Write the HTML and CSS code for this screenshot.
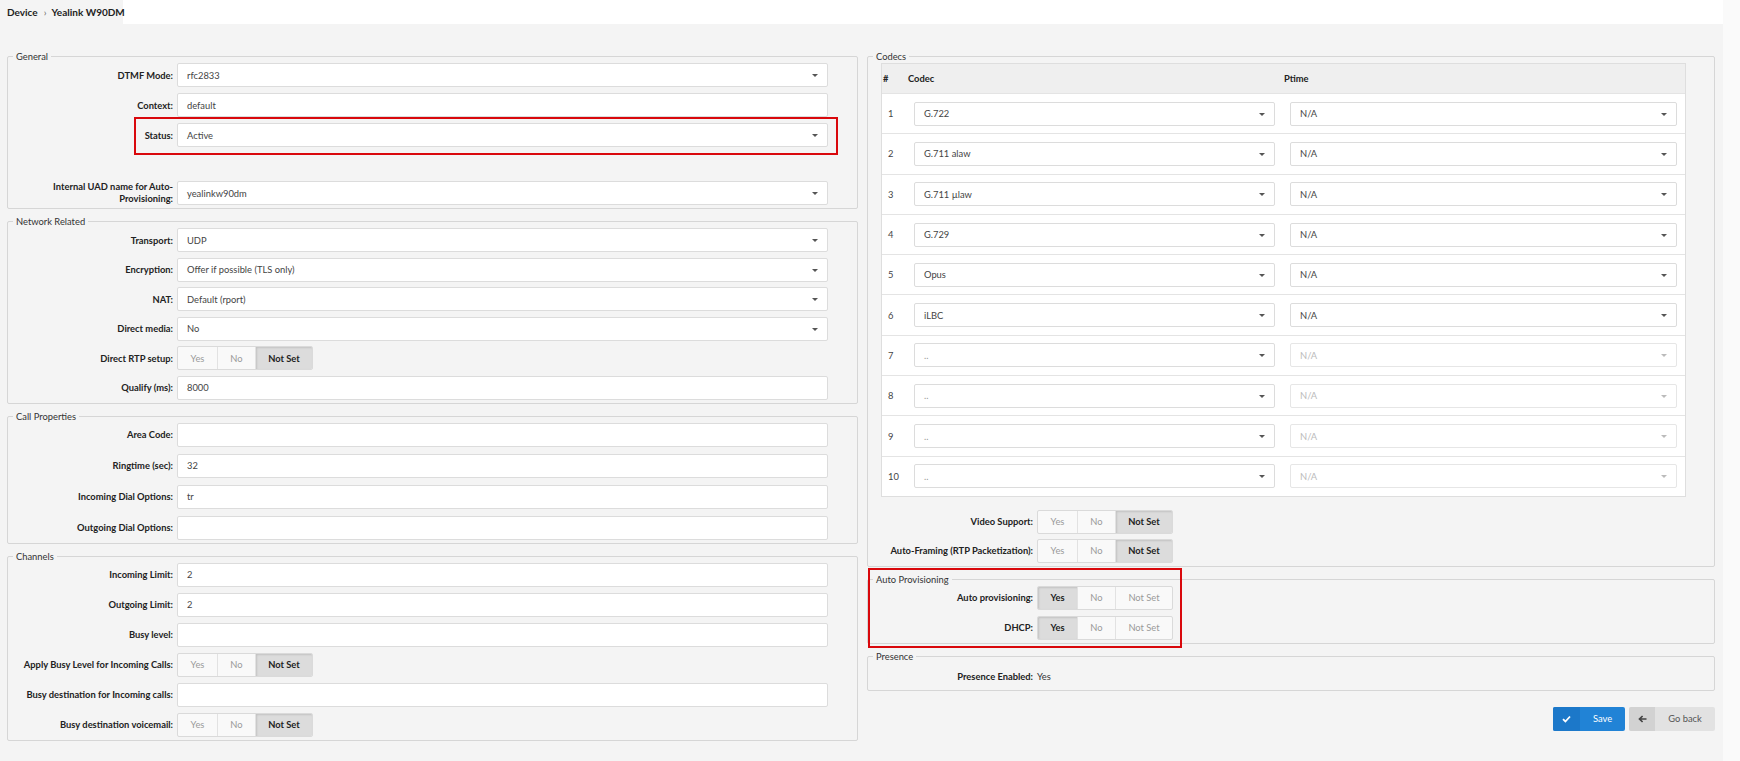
FILE: index.html
```html
<!DOCTYPE html>
<html>
<head>
<meta charset="utf-8">
<title>Device - Yealink W90DM</title>
<link rel="stylesheet" href="styles.css">
</head>
<body>
<div class="app">
  <div class="main">
    <header class="topbar">
      <div class="crumb"><span>Device</span><span class="sep">›</span><span>Yealink W90DM</span></div>
    </header>
    <div class="content">
      <div class="col">
        <fieldset class="fs">
          <legend>General</legend>
          <div class="rows">
            <div class="row"><label>DTMF Mode:</label><div class="ctl sel">rfc2833</div></div>
            <div class="row"><label>Context:</label><div class="ctl">default</div></div>
            <div class="row hl-wrap"><label>Status:</label><div class="ctl sel">Active</div><div class="hl hl-status"></div></div>
            <div class="spacer"></div>
            <div class="row"><label class="two">Internal UAD name for Auto-<br>Provisioning:</label><div class="ctl sel">yealinkw90dm</div></div>
          </div>
        </fieldset>
        <fieldset class="fs">
          <legend>Network Related</legend>
          <div class="rows net">
            <div class="row"><label>Transport:</label><div class="ctl sel">UDP</div></div>
            <div class="row"><label>Encryption:</label><div class="ctl sel">Offer if possible (TLS only)</div></div>
            <div class="row"><label>NAT:</label><div class="ctl sel">Default (rport)</div></div>
            <div class="row"><label>Direct media:</label><div class="ctl sel">No</div></div>
            <div class="row"><label>Direct RTP setup:</label><div class="tog"><span class="y">Yes</span><span class="n">No</span><span class="ns on">Not Set</span></div></div>
            <div class="row"><label>Qualify (ms):</label><div class="ctl">8000</div></div>
          </div>
        </fieldset>
        <fieldset class="fs">
          <legend>Call Properties</legend>
          <div class="rows call">
            <div class="row"><label>Area Code:</label><div class="ctl"></div></div>
            <div class="row"><label>Ringtime (sec):</label><div class="ctl">32</div></div>
            <div class="row"><label>Incoming Dial Options:</label><div class="ctl">tr</div></div>
            <div class="row"><label>Outgoing Dial Options:</label><div class="ctl"></div></div>
          </div>
        </fieldset>
        <fieldset class="fs">
          <legend>Channels</legend>
          <div class="rows">
            <div class="row"><label>Incoming Limit:</label><div class="ctl">2</div></div>
            <div class="row"><label>Outgoing Limit:</label><div class="ctl">2</div></div>
            <div class="row"><label>Busy level:</label><div class="ctl"></div></div>
            <div class="row"><label>Apply Busy Level for Incoming Calls:</label><div class="tog"><span class="y">Yes</span><span class="n">No</span><span class="ns on">Not Set</span></div></div>
            <div class="row"><label>Busy destination for Incoming calls:</label><div class="ctl"></div></div>
            <div class="row"><label>Busy destination voicemail:</label><div class="tog"><span class="y">Yes</span><span class="n">No</span><span class="ns on">Not Set</span></div></div>
          </div>
        </fieldset>
      </div>

      <div class="col">
        <fieldset class="fs codecs">
          <legend>Codecs</legend>
          <div class="ctable">
            <div class="tr thead"><div class="c0">#</div><div class="c1">Codec</div><div class="c2">Ptime</div></div>
            <div class="tr"><div class="c0">1</div><div class="c1"><div class="ctl sel">G.722</div></div><div class="c2"><div class="ctl sel">N/A</div></div></div>
            <div class="tr"><div class="c0">2</div><div class="c1"><div class="ctl sel">G.711 alaw</div></div><div class="c2"><div class="ctl sel">N/A</div></div></div>
            <div class="tr"><div class="c0">3</div><div class="c1"><div class="ctl sel">G.711 µlaw</div></div><div class="c2"><div class="ctl sel">N/A</div></div></div>
            <div class="tr"><div class="c0">4</div><div class="c1"><div class="ctl sel">G.729</div></div><div class="c2"><div class="ctl sel">N/A</div></div></div>
            <div class="tr"><div class="c0">5</div><div class="c1"><div class="ctl sel">Opus</div></div><div class="c2"><div class="ctl sel">N/A</div></div></div>
            <div class="tr"><div class="c0">6</div><div class="c1"><div class="ctl sel">iLBC</div></div><div class="c2"><div class="ctl sel">N/A</div></div></div>
            <div class="tr"><div class="c0">7</div><div class="c1"><div class="ctl sel ph">..</div></div><div class="c2"><div class="ctl sel dis">N/A</div></div></div>
            <div class="tr"><div class="c0">8</div><div class="c1"><div class="ctl sel ph">..</div></div><div class="c2"><div class="ctl sel dis">N/A</div></div></div>
            <div class="tr"><div class="c0">9</div><div class="c1"><div class="ctl sel ph">..</div></div><div class="c2"><div class="ctl sel dis">N/A</div></div></div>
            <div class="tr"><div class="c0">10</div><div class="c1"><div class="ctl sel ph">..</div></div><div class="c2"><div class="ctl sel dis">N/A</div></div></div>
          </div>
          <div class="rows after-table">
            <div class="row"><label>Video Support:</label><div class="tog"><span class="y">Yes</span><span class="n">No</span><span class="ns on">Not Set</span></div></div>
            <div class="row"><label>Auto-Framing (RTP Packetization):</label><div class="tog"><span class="y">Yes</span><span class="n">No</span><span class="ns on">Not Set</span></div></div>
          </div>
        </fieldset>
        <fieldset class="fs narrow">
          <legend>Auto Provisioning</legend>
          <div class="rows">
            <div class="row"><label>Auto provisioning:</label><div class="tog"><span class="y on">Yes</span><span class="n">No</span><span class="ns">Not Set</span></div></div>
            <div class="row"><label>DHCP:</label><div class="tog"><span class="y on">Yes</span><span class="n">No</span><span class="ns">Not Set</span></div></div>
          </div>
          <div class="hl hl-auto"></div>
        </fieldset>
        <fieldset class="fs presence">
          <legend>Presence</legend>
          <div class="row"><label>Presence Enabled:</label><span class="val">Yes</span></div>
        </fieldset>
        <div class="actions">
          <button class="btn save"><span class="ico"><svg width="9" height="8" viewBox="0 0 9 8"><path d="M1 4.2 L3.4 6.5 L8 1.5" fill="none" stroke="#fff" stroke-width="1.8"/></svg></span><span class="txt">Save</span></button>
          <button class="btn back"><span class="ico"><svg width="9" height="8" viewBox="0 0 9 8"><path d="M8.5 4 H2 M4.6 1 L1.5 4 L4.6 7" fill="none" stroke="#444" stroke-width="1.7"/></svg></span><span class="txt">Go back</span></button>
        </div>
      </div>
    </div>
  </div>
  <div class="strip"></div>
</div>
</body>
</html>
```

FILE: styles.css
```css
* { box-sizing: border-box; }
html, body { margin: 0; height: 100%; }
body {
  font-family: Lato, "Open Sans", "Liberation Sans", sans-serif;
  font-size: 9.35px;
  color: #333;
  background: #f4f4f4;
}
.app { display: flex; min-height: 100vh; }
.main { flex: 1; min-width: 0; }
.strip { width: 17px; background: #fafafa; flex: none; }

.topbar { height: 24px; background: #fff; display: flex; }
.crumb {
  width: 123px;
  background: #f4f4f4;
  padding-left: 7px;
  display: flex;
  align-items: center;
  font-size: 10px;
  font-weight: 700;
  color: #222;
  white-space: nowrap;
}
.crumb .sep { font-weight: 400; color: #666; margin: 0 5px 0 6px; }

.content {
  display: grid;
  grid-template-columns: 851px 1fr;
  column-gap: 9px;
  padding: 26px 8px 0 7px;
  align-items: start;
}

.fs {
  border: 1px solid #d6d6d6;
  border-radius: 2px;
  margin: 0 0 6px;
  padding: 0 0 3px;
  min-width: 0;
  position: relative;
}
.fs legend {
  margin-left: 5px;
  padding: 0 3px;
  font-size: 9.35px;
  line-height: 13px;
  color: #333;
}

.rows { display: flex; flex-direction: column; gap: 6px; }
.rows.net { gap: 5.5px; }
.rows.call { gap: 7px; }
.spacer { height: 22px; }

.row { display: flex; align-items: center; min-height: 24px; position: relative; }
.row > label {
  flex: none;
  width: 165px;
  margin-right: 4px;
  text-align: right;
  font-weight: 700;
  color: #222;
  white-space: nowrap;
}
.row > label.two { line-height: 12px; }

.ctl {
  flex: 1;
  height: 24px;
  margin-right: 29px;
  background: #fff;
  border: 1px solid #dcdcdc;
  border-radius: 2px;
  padding: 0 9px;
  display: flex;
  align-items: center;
  color: #444;
  position: relative;
  white-space: nowrap;
}
.sel::after {
  content: "";
  position: absolute;
  right: 9px;
  top: 50%;
  margin-top: -1px;
  border-left: 3px solid transparent;
  border-right: 3px solid transparent;
  border-top: 3px solid #555;
}
.ctl.ph { color: #999; }
.ctl.dis { color: #bbb; border-color: #e6e6e6; }
.ctl.dis::after { border-top-color: #bbb; }

.tog {
  display: flex;
  height: 24px;
  border: 1px solid #dadada;
  border-radius: 2px;
  overflow: hidden;
  background: #f9f9f9;
}
.tog span {
  display: flex;
  align-items: center;
  justify-content: center;
  color: #999;
  border-left: 1px solid #e2e2e2;
}
.tog span:first-child { border-left: 0; }
.tog .y { width: 39px; }
.tog .n { width: 38px; }
.tog .ns { width: 57px; }
.tog .on {
  background: #dcdcdc;
  color: #222;
  font-weight: 700;
  box-shadow: inset 1px 1px 2px rgba(0, 0, 0, 0.12);
}

/* highlight boxes */
.hl { position: absolute; border: 2px solid #d9080c; pointer-events: none; }
.hl-status { left: 126px; right: 19px; top: -6px; bottom: -8px; }
.hl-auto { left: 0; top: -18px; width: 314px; height: 80px; }

/* codecs table */
.ctable {
  margin: 0 28px 0 13px;
  border: 1px solid #dedede;
  background: #fff;
}
.tr {
  display: grid;
  grid-template-columns: 25px 377px 1fr;
  align-items: center;
  height: 40.3px;
  border-top: 1px solid #e4e4e4;
  color: #444;
}
.tr.thead {
  height: 29px;
  border-top: 0;
  background: #efefef;
  font-weight: 700;
  color: #222;
}
.tr .c0 { padding-left: 6px; }
.thead .c0 { padding-left: 1px; }
.thead .c1 { padding-left: 1px; }
.tr .c1 .ctl { margin: 0 9px 0 7px; }
.tr .c2 .ctl { margin: 0 8px 0 6px; }

.after-table { margin-top: 13px; gap: 5px; }
.codecs { padding-bottom: 3px; }

.presence { padding-bottom: 1px; }
.presence .row { margin-top: 2px; }
.presence .val { color: #333; }

.actions {
  display: flex;
  justify-content: flex-end;
  gap: 4px;
  margin-top: 16px;
}
.btn {
  display: flex;
  height: 24px;
  padding: 0;
  border: 0;
  border-radius: 2px;
  overflow: hidden;
  font-family: inherit;
  font-size: 9.35px;
  cursor: pointer;
}
.btn .ico { width: 27px; display: flex; align-items: center; justify-content: center; }
.btn .txt { flex: 1; display: flex; align-items: center; justify-content: center; }
.save { width: 72px; background: #2183d6; color: #fff; }
.save .ico { background: #1c78c9; }
.back { width: 86px; background: #e2e2e2; color: #555; }
.back .ico { background: #d2d2d2; width: 26px; }
```
